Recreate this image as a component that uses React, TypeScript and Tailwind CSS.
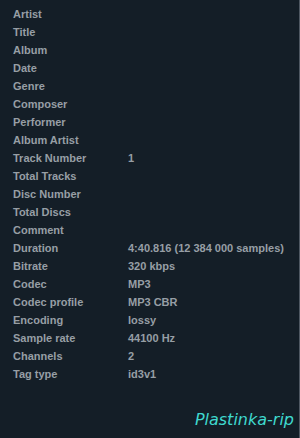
const rows: [string, string][] = [
  ['Artist', ''],
  ['Title', ''],
  ['Album', ''],
  ['Date', ''],
  ['Genre', ''],
  ['Composer', ''],
  ['Performer', ''],
  ['Album Artist', ''],
  ['Track Number', '1'],
  ['Total Tracks', ''],
  ['Disc Number', ''],
  ['Total Discs', ''],
  ['Comment', ''],
  ['Duration', '4:40.816 (12 384 000 samples)'],
  ['Bitrate', '320 kbps'],
  ['Codec', 'MP3'],
  ['Codec profile', 'MP3 CBR'],
  ['Encoding', 'lossy'],
  ['Sample rate', '44100 Hz'],
  ['Channels', '2'],
  ['Tag type', 'id3v1'],
];

export default function App() {
  return (
    <div className="w-[300px] h-[438px] bg-[#141e27] border-r border-[#4f5862] flex flex-col overflow-hidden">
      {/* Properties list */}
      <div className="pt-[5px] pl-[13px] flex flex-col font-['Liberation_Sans',Arial,sans-serif] text-[11px] font-bold text-[#979ea5]">
        {rows.map(([label, value]) => (
          <div key={label} className="flex h-[18px] leading-[18px]">
            <span className="w-[115px] shrink-0">{label}</span>
            <span className="whitespace-nowrap">{value}</span>
          </div>
        ))}
      </div>

      {/* Watermark */}
      <div className="mt-auto pb-[6px] pr-[5px] flex justify-end">
        <span className="font-['DejaVu_Sans',Verdana,sans-serif] italic text-[16px] text-[#3fd9cf]">
          Plastinka-rip
        </span>
      </div>
    </div>
  );
}
